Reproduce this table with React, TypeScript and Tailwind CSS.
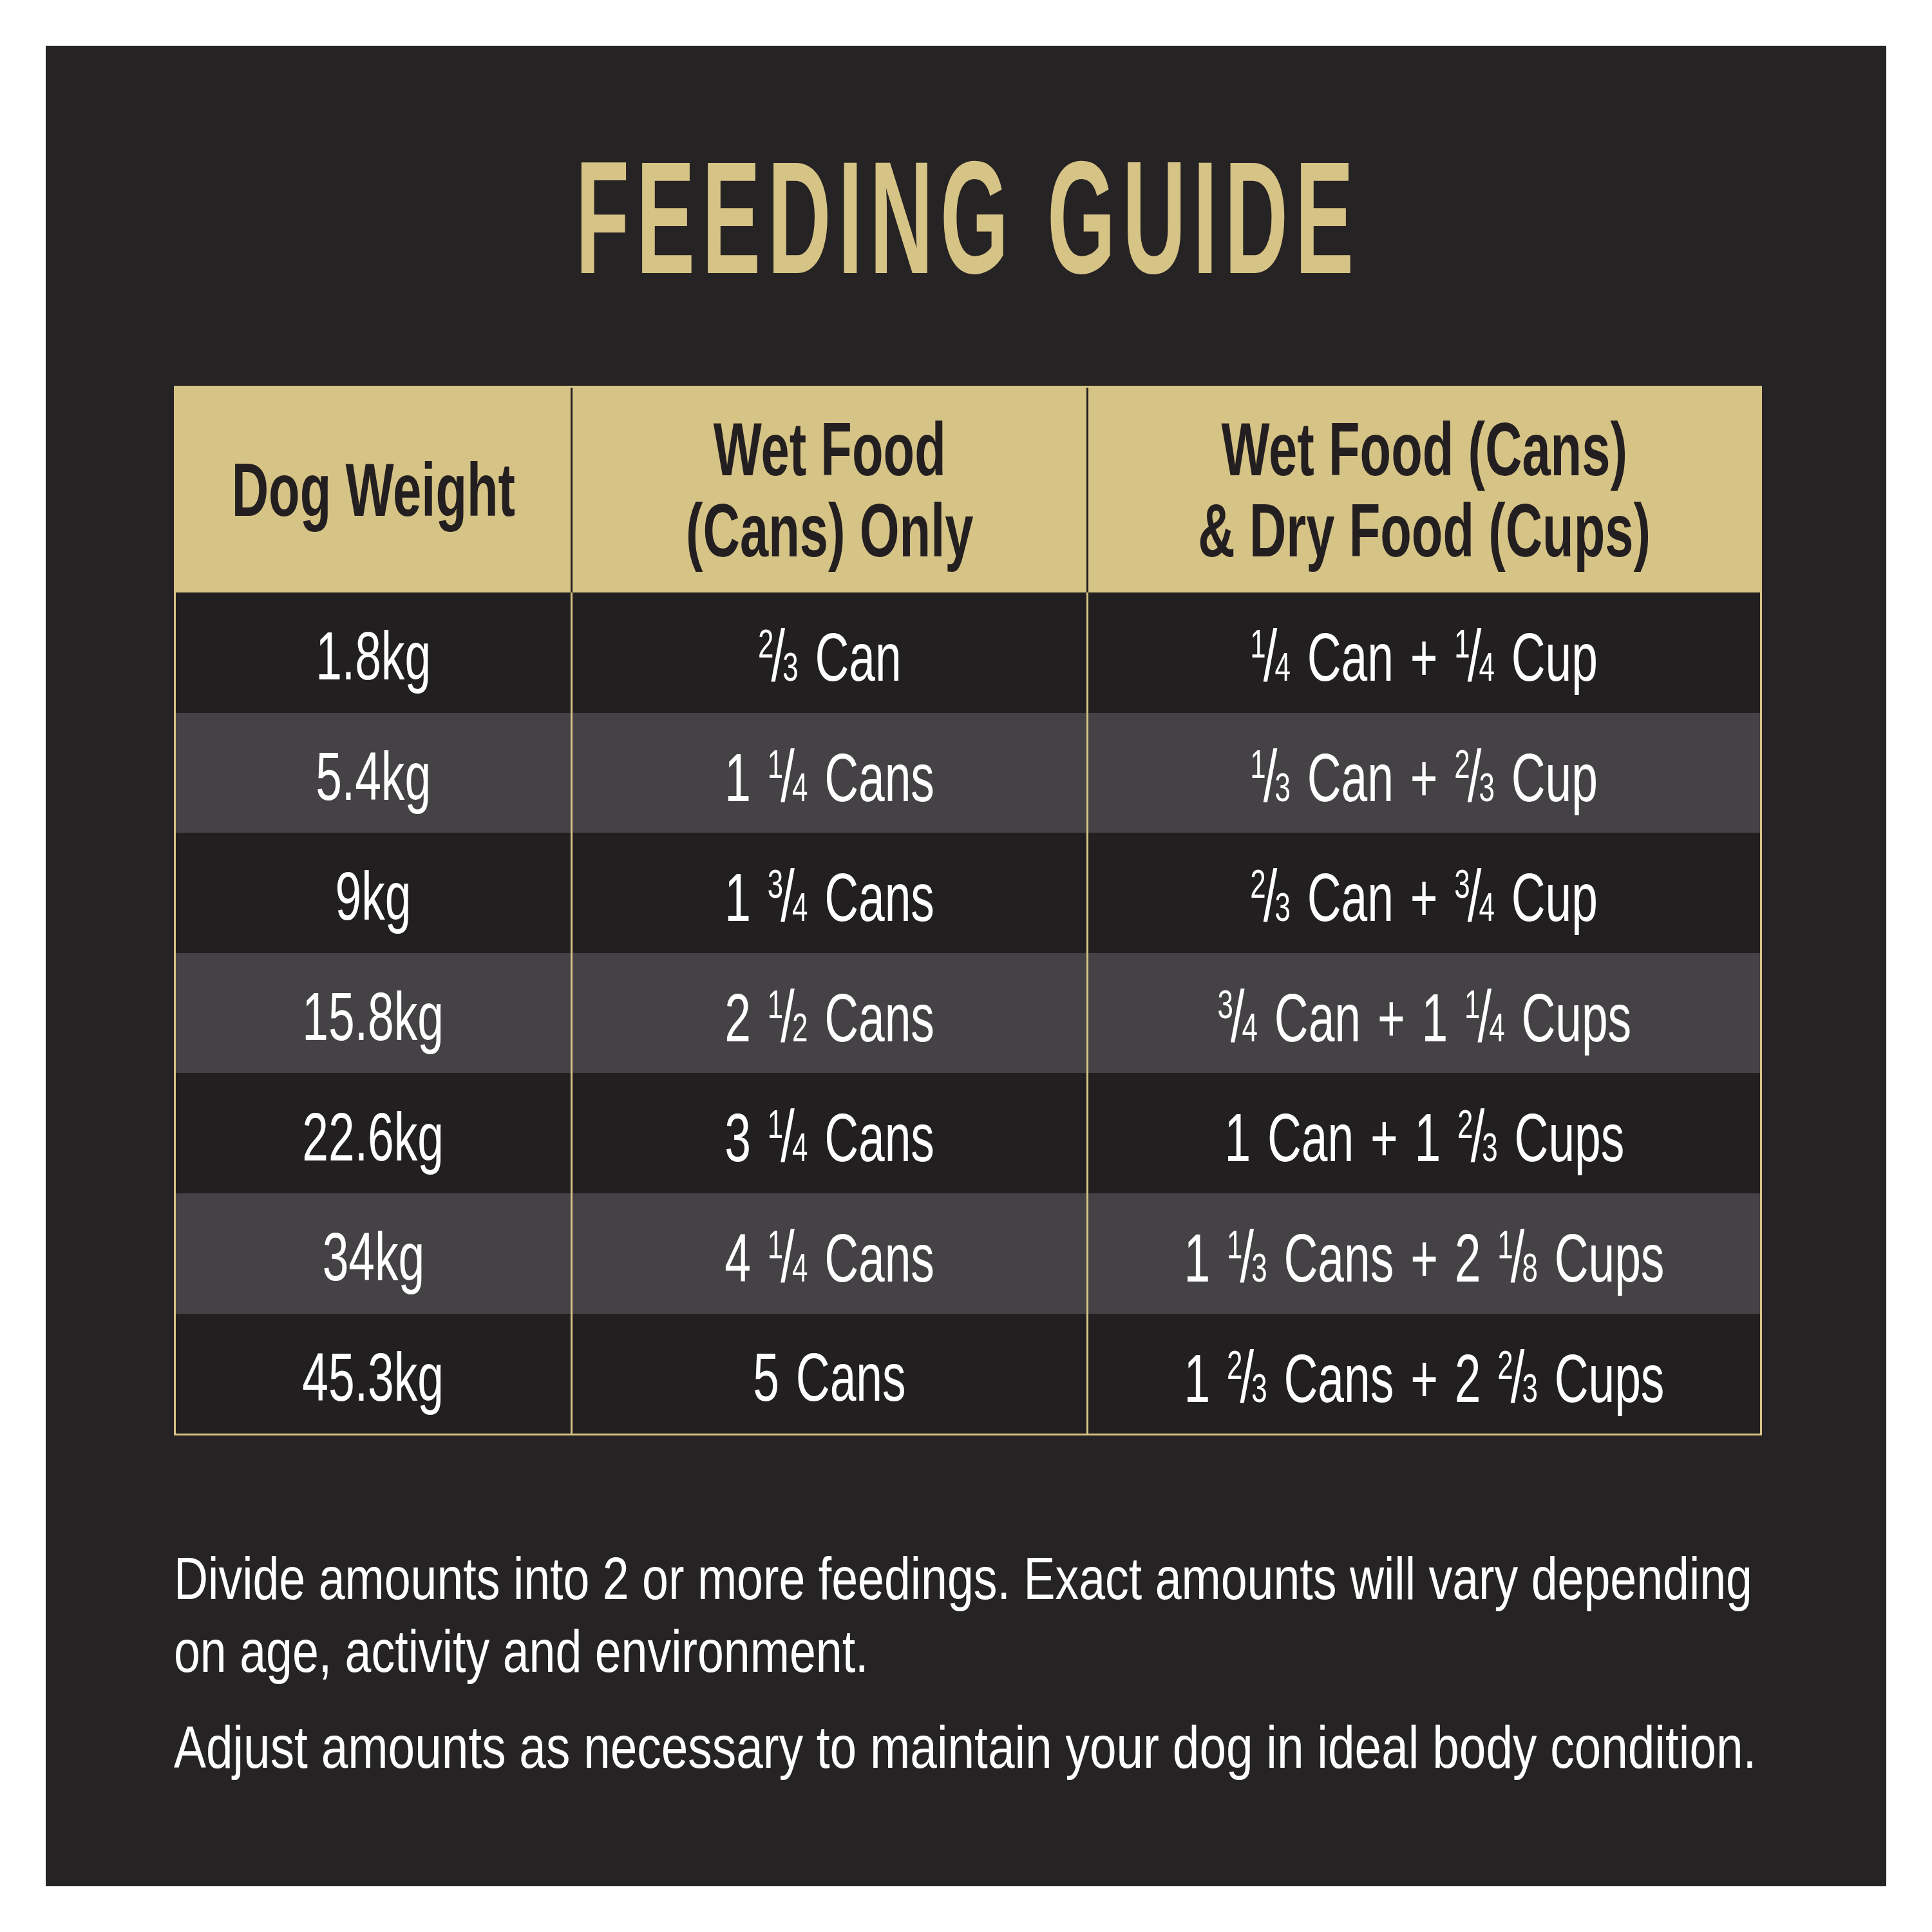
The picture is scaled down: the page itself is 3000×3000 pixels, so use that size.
import type { ReactNode } from 'react';

const rows: [string, string, string][] = [
  ['1.8kg', '⅔ Can', '¼ Can + ¼ Cup'],
  ['5.4kg', '1 ¼ Cans', '⅓ Can + ⅔ Cup'],
  ['9kg', '1 ¾ Cans', '⅔ Can + ¾ Cup'],
  ['15.8kg', '2 ½ Cans', '¾ Can + 1 ¼ Cups'],
  ['22.6kg', '3 ¼ Cans', '1 Can + 1 ⅔ Cups'],
  ['34kg', '4 ¼ Cans', '1 ⅓ Cans + 2 ⅛ Cups'],
  ['45.3kg', '5 Cans', '1 ⅔ Cans + 2 ⅔ Cups'],
];

const fractions: Record<string, [string, string]> = {
  '¼': ['1', '4'],
  '½': ['1', '2'],
  '¾': ['3', '4'],
  '⅓': ['1', '3'],
  '⅔': ['2', '3'],
  '⅛': ['1', '8'],
};

function Frac({ n, d }: { n: string; d: string }) {
  return (
    <span className="whitespace-nowrap">
      <span className="align-[0.56em] text-[0.6em]">{n}</span>
      <span className="mx-[-0.05em] text-[1.06em]">/</span>
      <span className="text-[0.6em]">{d}</span>
    </span>
  );
}

// swap unicode fraction glyphs for stacked numerator / denominator
function withFractions(text: string) {
  return Array.from(text).map((ch, i) => {
    const f = fractions[ch];
    return f ? <Frac key={i} n={f[0]} d={f[1]} /> : ch;
  });
}

function HeadCell({ children, divider }: { children: ReactNode; divider?: boolean }) {
  return (
    <div
      className={
        divider
          ? 'flex items-center justify-center text-center border-l-[3px] border-[#231f20]'
          : 'flex items-center justify-center text-center'
      }
    >
      <span className="whitespace-nowrap scale-x-[0.68]">{children}</span>
    </div>
  );
}

function BodyCell({ children, divider }: { children: ReactNode; divider?: boolean }) {
  return (
    <div
      className={
        divider
          ? 'flex items-center justify-center pt-[10px] border-l-[3px] border-[#d6c386]'
          : 'flex items-center justify-center pt-[10px]'
      }
    >
      <span className="whitespace-nowrap [word-spacing:8px] scale-x-[0.69]">{children}</span>
    </div>
  );
}

export default function App() {
  return (
    <div className="w-[3000px] h-[3000px] bg-white p-[71px] font-['Liberation_Sans',Arial,sans-serif]">
      <div className="flex h-full w-full flex-col bg-[#262324] pl-[199px] pr-[193px] pt-[143px]">
        {/* title */}
        <h1 className="flex h-[248px] justify-center text-[248px] font-bold leading-none text-[#d6c386]">
          <span className="whitespace-nowrap tracking-[20px] scale-x-[0.55]">FEEDING GUIDE</span>
        </h1>

        {/* table */}
        <div className="mt-[137px] border-[3px] border-[#d6c386]">
          <div className="grid h-[318px] grid-cols-[613px_801px_1046px] bg-[#d6c386] text-[117px] font-bold leading-[126px] text-[#231f20]">
            <HeadCell>Dog Weight</HeadCell>
            <HeadCell divider>
              Wet Food
              <br />
              (Cans) Only
            </HeadCell>
            <HeadCell divider>
              Wet Food (Cans)
              <br />
              &amp; Dry Food (Cups)
            </HeadCell>
          </div>

          {rows.map((r, i) => (
            <div
              key={r[0]}
              className={
                i % 2 === 1
                  ? 'grid h-[186.6px] grid-cols-[613px_801px_1046px] bg-[#444245] text-[106px] leading-none text-white'
                  : 'grid h-[186.6px] grid-cols-[613px_801px_1046px] bg-[#221f20] text-[106px] leading-none text-white'
              }
            >
              <BodyCell>{r[0]}</BodyCell>
              <BodyCell divider>{withFractions(r[1])}</BodyCell>
              <BodyCell divider>{withFractions(r[2])}</BodyCell>
            </div>
          ))}
        </div>

        {/* notes */}
        <div className="mt-[165px] text-[93.5px] leading-[113px] text-white">
          <p>
            <span className="block origin-left whitespace-nowrap scale-x-[0.786]">
              Divide amounts into 2 or more feedings. Exact amounts will vary depending
            </span>
            <span className="block origin-left whitespace-nowrap scale-x-[0.786]">
              on age, activity and environment.
            </span>
          </p>
          <p className="mt-[36px]">
            <span className="block origin-left whitespace-nowrap scale-x-[0.8]">
              Adjust amounts as necessary to maintain your dog in ideal body condition.
            </span>
          </p>
        </div>
      </div>
    </div>
  );
}
